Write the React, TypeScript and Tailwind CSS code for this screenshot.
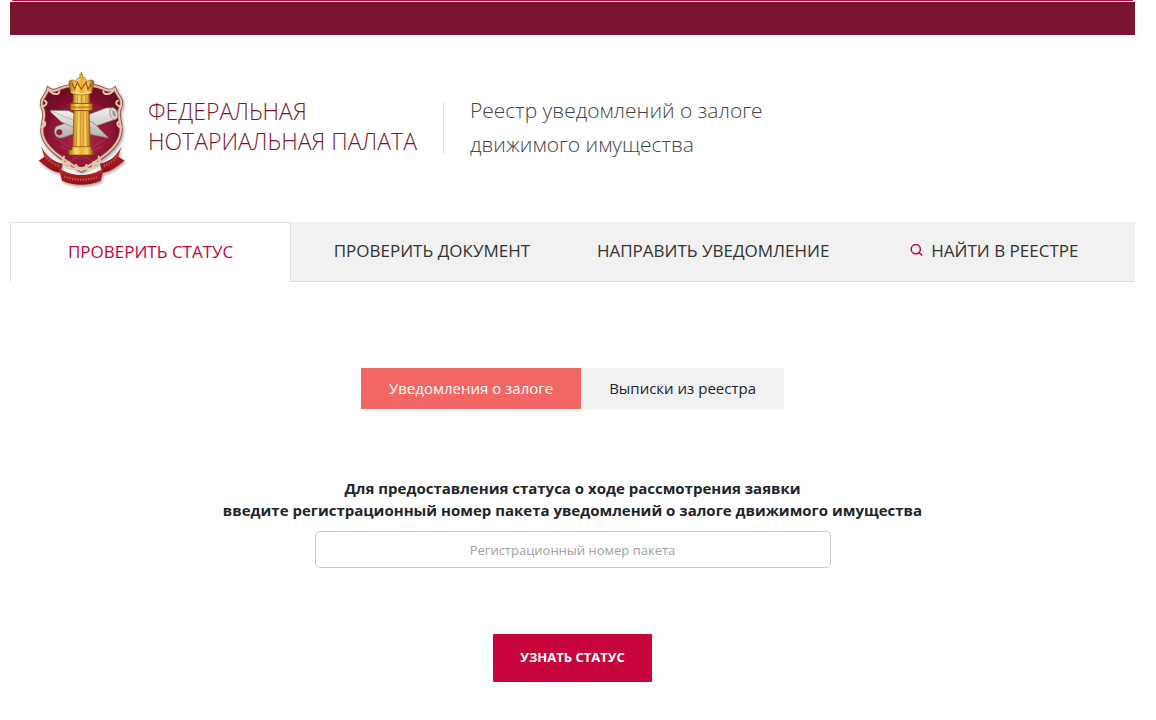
import React, { useState } from "react";
import { clsx } from "clsx";

const tabs = [
    { id: "status", label: "ПРОВЕРИТЬ СТАТУС" },
    { id: "document", label: "ПРОВЕРИТЬ ДОКУМЕНТ" },
    { id: "send", label: "НАПРАВИТЬ УВЕДОМЛЕНИЕ" },
    { id: "search", label: "НАЙТИ В РЕЕСТРЕ", icon: true },
];

const modes = ["Уведомления о залоге", "Выписки из реестра"];

function SearchIcon() {
    return (
        <svg width="13" height="13" viewBox="0 0 13 13" fill="none" stroke="#c8043c" strokeWidth="1.5" aria-hidden="true">
            <circle cx="5.8" cy="5.2" r="4.6" />
            <path d="M8.4 8 12.2 11.4" />
        </svg>
    );
}

function Emblem() {
    return (
        <svg className="shrink-0" width="110" height="130" viewBox="0 0 330 390" aria-hidden="true">
            <defs>
                <radialGradient id="shield" cx="0.5" cy="0.6" r="0.6">
                    <stop offset="0" stopColor="#b02a4a" />
                    <stop offset="0.6" stopColor="#8f1433" />
                    <stop offset="1" stopColor="#6d0a22" />
                </radialGradient>
                <linearGradient id="gold" x1="0" x2="1">
                    <stop offset="0" stopColor="#b56a10" />
                    <stop offset="0.3" stopColor="#fbdc70" />
                    <stop offset="0.5" stopColor="#eab03a" />
                    <stop offset="0.75" stopColor="#f8cf5c" />
                    <stop offset="1" stopColor="#96500a" />
                </linearGradient>
                <linearGradient id="ribbon" x1="0" x2="0" y1="0" y2="1">
                    <stop offset="0" stopColor="#c4202c" />
                    <stop offset="1" stopColor="#8d0f1c" />
                </linearGradient>
                <linearGradient id="paper" x1="0" x2="0" y1="0" y2="1">
                    <stop offset="0" stopColor="#f4f2f1" />
                    <stop offset="1" stopColor="#b5aeae" />
                </linearGradient>
                <filter id="shade" x="-10%" y="-10%" width="120%" height="120%">
                    <feDropShadow dx="3" dy="5" stdDeviation="4" floodColor="#000" floodOpacity="0.4" />
                </filter>
            </defs>

            <g filter="url(#shade)">
                {/* Shield */}
                <path
                    d="M55 74 C78 92 92 64 122 66 L184 66 C216 62 230 92 254 74 C260 96 284 106 270 132 C258 158 280 180 270 214 C260 252 224 276 154 320 C84 276 48 252 38 214 C30 180 52 158 38 132 C26 106 50 96 55 74Z"
                    fill="url(#shield)"
                    stroke="#8c4444"
                    strokeWidth="11"
                />
                <path
                    d="M55 74 C78 92 92 64 122 66 L184 66 C216 62 230 92 254 74 C260 96 284 106 270 132 C258 158 280 180 270 214 C260 252 224 276 154 320 C84 276 48 252 38 214 C30 180 52 158 38 132 C26 106 50 96 55 74Z"
                    fill="none"
                    stroke="#e6c3ae"
                    strokeWidth="6"
                />
                <g fill="none" stroke="#e8c3aa" strokeWidth="6" strokeLinecap="round">
                    <path d="M55 74 C66 94 88 94 88 82 M254 74 C243 94 220 94 220 82" />
                    <path d="M34 128 C50 126 54 114 44 110 M274 128 C258 126 254 114 264 110" />
                    <path d="M34 190 C46 188 50 176 40 172 M274 190 C262 188 258 176 268 172" />
                    <path d="M102 278 C92 298 110 306 118 294 M206 278 C216 298 198 306 190 294" />
                </g>
            </g>

            {/* Rays under the column */}
            <g stroke="#cf6078" strokeWidth="2" opacity="0.5">
                <path d="M154 270 L72 220 M154 270 L90 248 M154 270 L236 220 M154 270 L218 248 M154 270 L118 294 M154 270 L190 294" />
            </g>

            {/* Scroll and quill */}
            <path d="M228 132 L250 131 C267 140 268 158 256 166 L98 221 C78 228 66 204 78 188Z" fill="url(#paper)" stroke="#817979" strokeWidth="2" />
            <ellipse cx="251" cy="149" rx="11" ry="18" fill="#ded9d7" stroke="#8a8080" strokeWidth="2" transform="rotate(-18 251 149)" />
            <ellipse cx="252" cy="149" rx="4" ry="10" fill="#989090" transform="rotate(-18 252 149)" />
            <circle cx="88" cy="205" r="9" fill="#981b36" />
            <path d="M62 139 L116 140 L192 178 L236 222 L174 210 L94 174 L62 144Z" fill="url(#paper)" stroke="#807777" strokeWidth="2" />
            <path d="M64 141 L190 194" stroke="#aaa1a1" strokeWidth="2" />

            {/* Column */}
            <path d="M132 140 L177 140 L182 252 L128 252Z" fill="url(#gold)" stroke="#8a4a08" strokeWidth="2" />
            <path d="M142 142 L139 250 M151 142 V250 M160 142 V250 M169 142 L172 250" stroke="#b87a1c" strokeWidth="2" />
            <path d="M126 248 H184 V257 H190 V273 H116 V257 H126Z" fill="url(#gold)" stroke="#7d4106" strokeWidth="2" />
            <rect x="121" y="119" width="67" height="20" fill="url(#gold)" stroke="#8a4a08" strokeWidth="2" />
            <path d="M128 130 H181" stroke="#955307" strokeWidth="5" strokeDasharray="3 3" />
            <path d="M130 88 H178 L180 118 H129Z" fill="url(#gold)" stroke="#955307" strokeWidth="2" />
            <path d="M143 91 V116 M155 91 V116 M167 91 V116" stroke="#b5741a" strokeWidth="2" />
            <path d="M122 86 L118 64 C112 46 130 44 138 54 C138 42 148 41 154 38 C161 41 170 42 170 54 C180 44 198 46 190 64 L186 86 C174 94 134 94 122 86Z" fill="url(#gold)" stroke="#8f4c06" strokeWidth="2" />
            <path d="M126 58 L134 76 L142 55 L154 76 L168 55 L174 76 L184 58" fill="none" stroke="#a75b08" strokeWidth="4" />
            <path d="M124 84 C138 91 170 91 184 84" fill="none" stroke="#fae087" strokeWidth="4" />
            <path d="M154 25 V39 M148 32 H160" stroke="#b16c12" strokeWidth="4" />
            <circle cx="154" cy="37" r="6" fill="#e4ab32" />

            {/* Ribbon */}
            <g filter="url(#shade)">
                <path d="M33 246 C48 276 67 292 98 299 L91 326 C60 322 46 304 26 290 L43 278Z" fill="url(#ribbon)" />
                <path d="M275 246 C260 276 241 292 210 299 L217 326 C248 322 262 304 284 290 L265 278Z" fill="url(#ribbon)" />
                <path d="M86 312 C126 340 182 340 222 312 L212 350 C176 366 132 366 96 350Z" fill="url(#ribbon)" />
            </g>
            <g fill="none" stroke="#d98646" strokeWidth="7" strokeDasharray="4 4" opacity="0.6">
                <path d="M41 268 C52 286 68 300 88 306" />
                <path d="M267 268 C256 286 240 300 220 306" />
                <path d="M103 338 C138 350 170 350 205 338" />
            </g>
            <path
                d="M102 302 C108 288 130 308 112 312 C128 318 140 310 154 318 C168 310 180 318 196 312 C178 308 200 288 206 302"
                fill="none"
                stroke="#e9c9b0"
                strokeWidth="6"
                strokeLinecap="round"
            />
            <path d="M138 300 C138 316 170 316 170 300" fill="none" stroke="#e4bfa0" strokeWidth="6" />
        </svg>
    );
}

export default function App() {
    const [activeTab, setActiveTab] = useState("status");
    const [mode, setMode] = useState(0);

    return (
        <div className="bg-white pl-[10px] pr-[21px] font-['Open_Sans',sans-serif] text-[#212529]">
            <div className="mx-0.5 h-px rounded-full bg-[#c8043c]" />
            <div className="mt-px h-[33px] bg-[#7a1531]" />

            <header className="flex items-start pt-[29px] pl-5">
                <Emblem />
                <p className="mt-8 ml-2 text-[23px] leading-[30px] font-light text-[#7a1531]">
                    ФЕДЕРАЛЬНАЯ
                    <br />
                    НОТАРИАЛЬНАЯ ПАЛАТА
                </p>
                <div className="mt-[38px] ml-[26px] h-[52px] w-px bg-[#dddddd]" />
                <h1 className="mt-[29px] ml-[26px] text-[21px] leading-[34px] font-light text-[#444444]">
                    Реестр уведомлений о залоге
                    <br />
                    движимого имущества
                </h1>
            </header>

            <nav className="mt-7 grid h-[60px] grid-cols-4 bg-[#f1f1f1]">
                {tabs.map((tab) => (
                    <button
                        key={tab.id}
                        type="button"
                        onClick={() => setActiveTab(tab.id)}
                        className={clsx(
                            "flex items-center justify-center gap-2 border-[#dddddd] pb-0.5 text-[17px] font-medium whitespace-nowrap",
                            activeTab === tab.id ? "border-x border-t bg-white text-[#c8043c]" : "border-b text-[#333333]"
                        )}
                    >
                        {tab.icon && <SearchIcon />}
                        {tab.label}
                    </button>
                ))}
            </nav>

            <main className="flex flex-col items-center pt-[86px] pb-9">
                <div className="flex h-[41px] text-[15px]">
                    {modes.map((label, index) => (
                        <button
                            key={label}
                            type="button"
                            onClick={() => setMode(index)}
                            className={clsx("px-7", mode === index ? "bg-[#f26663] text-white" : "bg-[#f1f1f1]")}
                        >
                            {label}
                        </button>
                    ))}
                </div>

                <form className="mt-[68px] flex w-full flex-col items-center" onSubmit={(e) => e.preventDefault()}>
                    <label htmlFor="package-number" className="text-center text-[15px] leading-[22px] font-bold">
                        Для предоставления статуса о ходе рассмотрения заявки
                        <br />
                        введите регистрационный номер пакета уведомлений о залоге движимого имущества
                    </label>
                    <input
                        id="package-number"
                        type="text"
                        placeholder="Регистрационный номер пакета"
                        className="mt-[10px] h-[37px] w-full max-w-[516px] rounded-[5px] border border-[#c8c8c8] text-center text-[13px] placeholder:text-[#a0a0a0]"
                    />
                    <button type="submit" className="mt-[66px] h-12 rounded-[1px] bg-[#c8043c] px-[27px] text-[13px] font-bold text-white">
                        УЗНАТЬ СТАТУС
                    </button>
                </form>
            </main>
        </div>
    );
}
